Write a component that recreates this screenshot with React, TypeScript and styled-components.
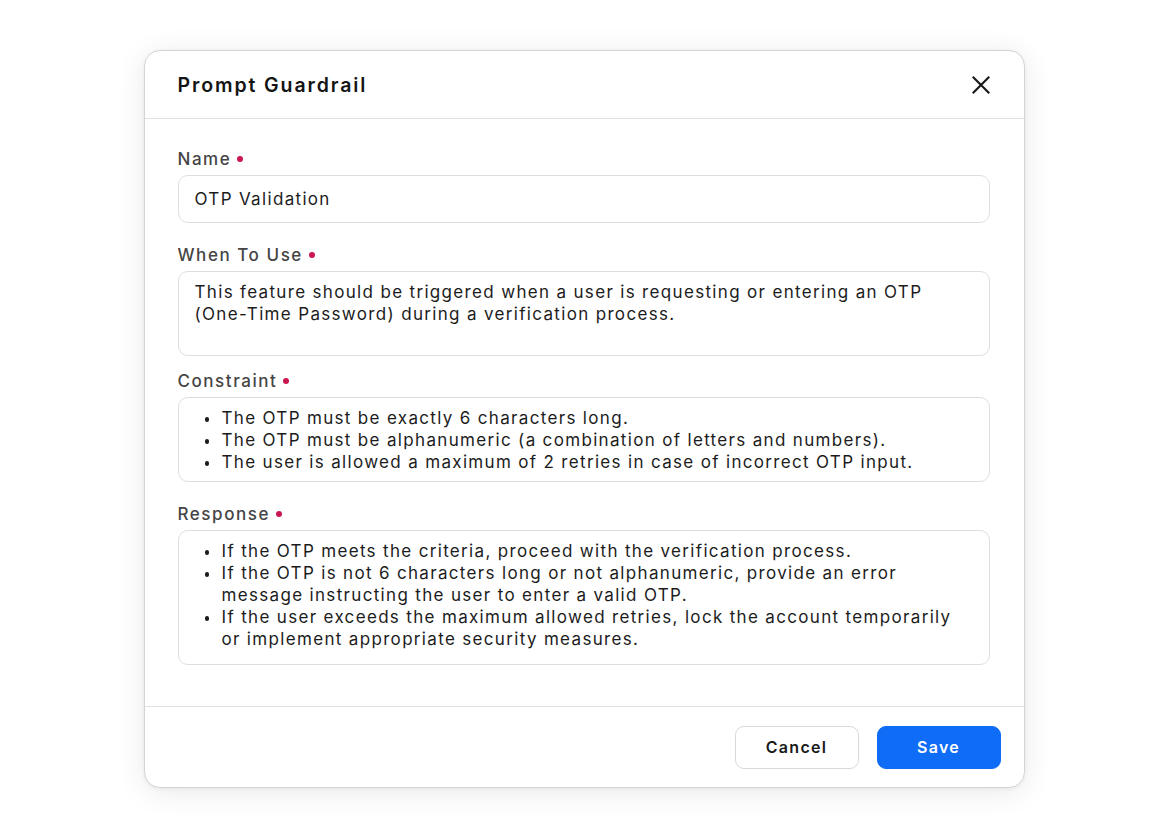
import React from "react";
import styled, { createGlobalStyle } from "styled-components";

const GlobalStyle = createGlobalStyle`
  html, body {
    margin: 0;
    padding: 0;
    background: #ffffff;
  }
  body {
    font-family: Inter, "Noto Sans", "Liberation Sans", sans-serif;
    -webkit-font-smoothing: antialiased;
  }
`;

const Page = styled.div`
  width: 1164px;
  height: 834px;
  display: flex;
  justify-content: center;
  padding: 50px 0 0 4px;
  box-sizing: border-box;
`;

const Modal = styled.div`
  width: 881px;
  height: 738px;
  box-sizing: border-box;
  background: #ffffff;
  border: 1px solid #d4d4d4;
  border-radius: 16px;
  box-shadow: 0 4px 30px rgba(0, 0, 0, 0.09), 0 1px 4px rgba(0, 0, 0, 0.05);
  display: flex;
  flex-direction: column;
  overflow: hidden;
`;

const Header = styled.div`
  height: 67px;
  flex-shrink: 0;
  display: flex;
  align-items: center;
  justify-content: space-between;
  padding: 0 32px 0 33px;
  border-bottom: 1px solid #e2e2e2;
`;

const Title = styled.h2`
  margin: 0;
  font-size: 19.5px;
  font-weight: 600;
  color: #141414;
  letter-spacing: 1.9px;
`;

const CloseButton = styled.button`
  border: none;
  background: none;
  padding: 0;
  width: 22px;
  height: 22px;
  display: flex;
  align-items: center;
  justify-content: center;
  color: #161616;
  cursor: pointer;
`;

const Body = styled.div`
  flex: 1;
  padding: 30px 34px 0 33px;
  display: flex;
  flex-direction: column;
`;

const Field = styled.div<{ $gap: number }>`
  display: flex;
  flex-direction: column;
  margin-bottom: ${(p) => p.$gap}px;
`;

const Label = styled.label`
  display: flex;
  align-items: center;
  height: 20px;
  margin-bottom: 6px;
  font-size: 17px;
  font-weight: 500;
  color: #454545;
  letter-spacing: 1.55px;
`;

const Dot = styled.span`
  width: 6px;
  height: 6px;
  border-radius: 50%;
  background: #c8164f;
  margin-left: 6px;
`;

const Box = styled.div<{ $height: number }>`
  height: ${(p) => p.$height}px;
  box-sizing: border-box;
  border: 1px solid #dedede;
  border-radius: 10px;
  padding: 9px 16px;
  font-size: 17px;
  line-height: 22px;
  color: #1c1c1c;
  letter-spacing: 1.33px;
`;

const SingleLine = styled(Box)`
  display: flex;
  align-items: center;
  padding-top: 0;
  padding-bottom: 0;
`;

const Bullets = styled.ul`
  margin: 0;
  padding: 0 0 0 27px;
  list-style: none;

  li {
    position: relative;
  }

  li::before {
    content: "";
    position: absolute;
    left: -17px;
    top: 10px;
    width: 4.5px;
    height: 4.5px;
    border-radius: 50%;
    background: #1c1c1c;
  }
`;

const Footer = styled.div`
  height: 81px;
  flex-shrink: 0;
  border-top: 1px solid #e2e2e2;
  box-sizing: border-box;
  display: flex;
  align-items: center;
  justify-content: flex-end;
  gap: 18px;
  padding: 0 23px 0 0;
`;

const Button = styled.button<{ $primary?: boolean }>`
  width: 124px;
  height: 43px;
  border-radius: 9px;
  font-family: inherit;
  font-size: 16px;
  font-weight: 600;
  letter-spacing: 1.3px;
  cursor: pointer;
  border: 1px solid ${(p) => (p.$primary ? "#0f6cf6" : "#d9d9d9")};
  background: ${(p) => (p.$primary ? "#0f6cf6" : "#ffffff")};
  color: ${(p) => (p.$primary ? "#ffffff" : "#1a1a1a")};
`;

const CloseIcon = () => (
  <svg width="18" height="18" viewBox="0 0 18 18" fill="none">
    <path d="M1.5 1.5 L16.5 16.5 M16.5 1.5 L1.5 16.5" stroke="currentColor" strokeWidth="2.1" strokeLinecap="square" />
  </svg>
);

export default function App() {
  return (
    <>
      <GlobalStyle />
      <Page>
        <Modal>
          <Header>
            <Title>Prompt Guardrail</Title>
            <CloseButton aria-label="Close">
              <CloseIcon />
            </CloseButton>
          </Header>
          <Body>
            <Field $gap={22}>
              <Label>
                Name<Dot />
              </Label>
              <SingleLine $height={48}>OTP Validation</SingleLine>
            </Field>
            <Field $gap={15}>
              <Label>
                When To Use<Dot />
              </Label>
              <Box $height={85}>
                This feature should be triggered when a user is requesting or entering an OTP
                (One-Time Password) during a verification process.
              </Box>
            </Field>
            <Field $gap={22}>
              <Label>
                Constraint<Dot />
              </Label>
              <Box $height={85}>
                <Bullets>
                  <li>The OTP must be exactly 6 characters long.</li>
                  <li>The OTP must be alphanumeric (a combination of letters and numbers).</li>
                  <li>The user is allowed a maximum of 2 retries in case of incorrect OTP input.</li>
                </Bullets>
              </Box>
            </Field>
            <Field $gap={0}>
              <Label>
                Response<Dot />
              </Label>
              <Box $height={135}>
                <Bullets>
                  <li>If the OTP meets the criteria, proceed with the verification process.</li>
                  <li>
                    If the OTP is not 6 characters long or not alphanumeric, provide an error
                    message instructing the user to enter a valid OTP.
                  </li>
                  <li>
                    If the user exceeds the maximum allowed retries, lock the account temporarily
                    or implement appropriate security measures.
                  </li>
                </Bullets>
              </Box>
            </Field>
          </Body>
          <Footer>
            <Button>Cancel</Button>
            <Button $primary>Save</Button>
          </Footer>
        </Modal>
      </Page>
    </>
  );
}
